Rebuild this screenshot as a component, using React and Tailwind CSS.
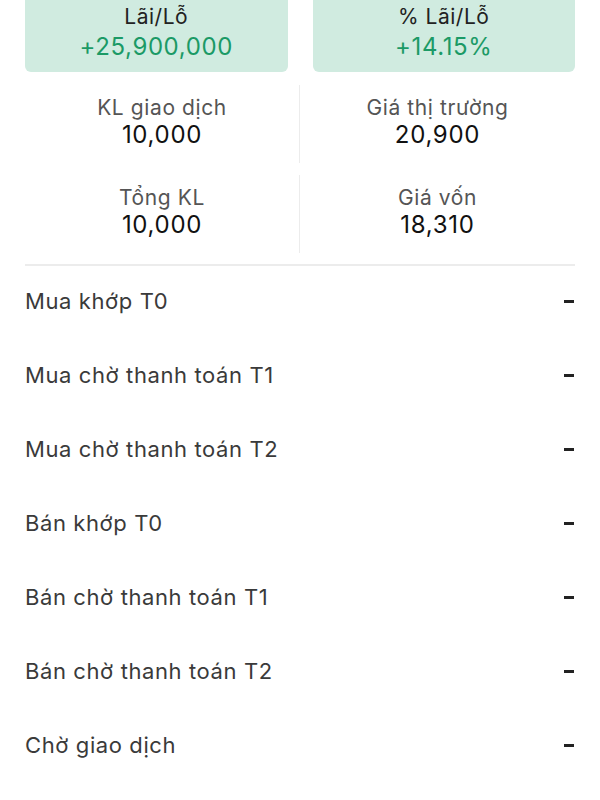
export default function App() {
  const rows = [
    "Mua khớp T0",
    "Mua chờ thanh toán T1",
    "Mua chờ thanh toán T2",
    "Bán khớp T0",
    "Bán chờ thanh toán T1",
    "Bán chờ thanh toán T2",
    "Chờ giao dịch",
  ];
  const stats = [
    ["KL giao dịch", "10,000", "Giá thị trường", "20,900"],
    ["Tổng KL", "10,000", "Giá vốn", "18,310"],
  ];
  return (
    <div className="w-[600px] h-[800px] bg-white overflow-hidden px-[25px] font-['Inter',sans-serif]">
      <div className="grid grid-cols-2 gap-[25px]">
        <div className="bg-[#d0ebe0] rounded-b-[6px] h-[72px] flex flex-col items-center pt-[5px]">
          <div className="text-[21px] leading-[24px] tracking-[0.5px] text-[#222]">Lãi/Lỗ</div>
          <div className="text-[24px] leading-[36px] tracking-[0.6px] text-[#1b9a66]">+25,900,000</div>
        </div>
        <div className="bg-[#d0ebe0] rounded-b-[6px] h-[72px] flex flex-col items-center pt-[5px]">
          <div className="text-[21px] leading-[24px] tracking-[0.5px] text-[#222]">% Lãi/Lỗ</div>
          <div className="text-[24px] leading-[36px] tracking-[0.6px] text-[#1b9a66]">+14.15%</div>
        </div>
      </div>
      <div className="flex flex-col gap-[12px] mt-[13px]">
        {stats.map((s, i) => (
          <div key={i} className="grid grid-cols-2">
            <div className="flex flex-col items-center pt-[11px] pb-[13px] border-r border-[#ececec]">
              <div className="text-[21px] leading-[24px] tracking-[0.6px] text-[#555]">{s[0]}</div>
              <div className="text-[24px] leading-[30px] tracking-[0.7px] text-[#111]">{s[1]}</div>
            </div>
            <div className="flex flex-col items-center pt-[11px] pb-[13px]">
              <div className="text-[21px] leading-[24px] tracking-[0.6px] text-[#555]">{s[2]}</div>
              <div className="text-[24px] leading-[30px] tracking-[0.7px] text-[#111]">{s[3]}</div>
            </div>
          </div>
        ))}
      </div>
      <div className="mt-[11px] h-[2px] bg-[#ececec]" />
      <div className="flex flex-col -mt-[2px]">
        {rows.map((r) => (
          <div key={r} className="h-[74px] flex items-center justify-between">
            <span className="text-[22px] tracking-[0.6px] text-[#3a3a3a]">{r}</span>
            <span className="w-[10px] h-[3px] bg-[#222] mr-[1px]" />
          </div>
        ))}
      </div>
    </div>
  );
}
